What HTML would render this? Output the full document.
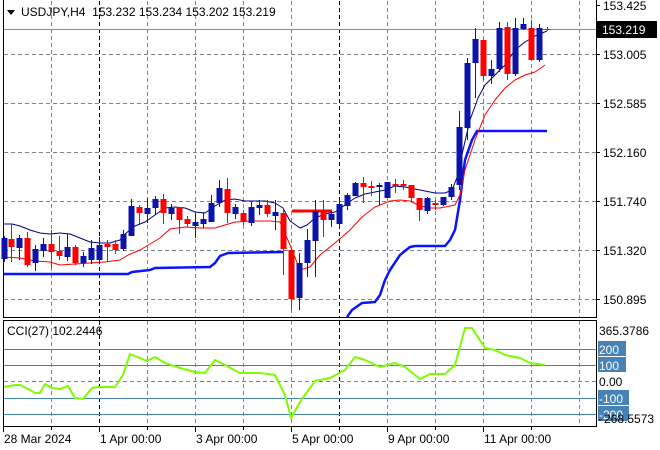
<!DOCTYPE html>
<html><head><meta charset="utf-8"><style>
html,body{margin:0;padding:0;background:#fff;width:660px;height:450px;overflow:hidden}
svg{display:block}
text{font-family:"Liberation Sans","DejaVu Sans",sans-serif;font-size:12px}
</style></head><body>
<svg id="s" width="660" height="450" xmlns="http://www.w3.org/2000/svg">
<g stroke="#7a8591" stroke-dasharray="4,3" stroke-width="1" id="grid"></g>
<path d="M3.5 0 V317.5 H596.5 V0" fill="none" stroke="#000"/>
<rect x="3.5" y="320.5" width="593" height="106" fill="none" stroke="#000"/>
<line x1="4" y1="29.5" x2="596" y2="29.5" stroke="#8a8a8a"/>
<g id="ind"></g>
<g id="c"></g>
<g id="lab"></g>
<path d="M7 10 L15 10 L11 15 Z" fill="#000"/>
<text x="21" y="16" fill="#000" xml:space="preserve">USDJPY,H4  153.232 153.234 153.202 153.219</text>
<text x="7" y="335" fill="#000">CCI(27) 102.2446</text>
</svg>
<script>
var NS="http://www.w3.org/2000/svg";
function el(p,t,a,txt){var e=document.createElementNS(NS,t);for(var k in a)e.setAttribute(k,a[k]);if(txt!==undefined)e.textContent=txt;document.getElementById(p).appendChild(e);return e;}
[51,99,147,195,243,291,339,387,435,483,531,579].forEach(function(x){
 var blk=(x==99||x==339);
 el('grid','line',{x1:x+.5,y1:1,x2:x+.5,y2:317,stroke:blk?'#000':'#7a8591'});
 el('grid','line',{x1:x+.5,y1:321,x2:x+.5,y2:426,stroke:blk?'#000':'#7a8591'});
});
[54,103,152,201,250,299].forEach(function(y){el('grid','line',{x1:4,y1:y+.5,x2:596,y2:y+.5});});
el('grid','line',{x1:4,y1:381.5,x2:596,y2:381.5});
[349,365,398,414].forEach(function(y){el('ind','line',{x1:4,y1:y+.5,x2:596,y2:y+.5,stroke:'#4682b4'});});
function pl(pts,col,w){el('ind','polyline',{points:pts,fill:'none',stroke:col,'stroke-width':w,'stroke-linejoin':'round'});}
pl("4,274 128,274 132,272 150,270 155,268 210,267 215,263 220,256 228,253 283,252",'#0a14ff',2.5);
pl("347,317 352,310 362,303 375,302 380,295 385,280 390,270 400,255 410,247 415,246 445,246 450,240 455,230 460,200 465,160 472,140 477,131 547,131",'#0a14ff',2.5);
pl("292,211 332,211",'#ff0000',3);
pl("4,224 12,224 20,226 30,230 40,233 50,234 60,233 70,234 80,238 90,242 100,243 110,243 120,240 125,234 135,226 145,222 155,215 165,208 175,207 185,208 195,212 205,213 215,206 225,200 235,199 245,201 255,201 265,201 275,203 283,208 290,221 300,228 307,225 315,218 325,214 335,212 345,205 355,198 365,194 375,192 385,190 395,186 405,187 415,189 425,191 435,193 445,193 452,190 458,175 463,150 470,120 478,98 485,85 495,75 505,65 515,50 525,42 535,36 547,31",'#00007f',1);
pl("4,257 20,258 35,261 50,262 60,265 75,264 90,263 105,262 120,260 128,255 140,250 160,238 170,229 185,227 200,228 215,228 235,222 250,221 270,221 280,222 290,245 300,270 310,267 320,255 335,243 350,230 362,217 375,207 390,201 400,200 410,201 420,206 430,208 440,208 455,205 460,195 465,170 475,140 485,115 495,100 505,88 515,80 525,75 535,72 545,65",'#ff0000',1);
pl("4,387 15,385 20,385 30,390 35,393 40,393 45,384 52,388 60,389 68,386 75,398 83,399 92,388 98,387 115,387 123,375 130,354 147,361 155,357 165,363 180,368 195,372 205,373 215,360 225,365 240,373 260,373 275,375 285,395 291,418 300,402 315,381 330,378 345,370 355,357 365,360 380,367 395,363 405,367 420,379 430,374 445,374 455,365 465,328 472,328 485,348 495,350 505,355 520,358 530,363 545,365",'#7cfc00',2);
var C=[[4,259,238,236,262],[11,239,247,224,262],[19,248,238,235,260],[27,238,265,232,267],[35,263,249,245,271],[43,251,244,238,257],[51,244,252,230,268],[59,251,256,236,260],[67,257,247,234,261],[75,247,263,245,265],[83,263,256,252,267],[91,260,248,240,264],[99,260,245,237,264],[107,244,247,240,262],[115,244,250,240,254],[123,249,234,230,251],[131,236,206,199,236],[139,207,213,205,224],[147,214,208,198,223],[155,208,199,196,215],[163,199,213,194,224],[171,214,208,204,220],[179,207,220,207,234],[187,219,224,216,227],[195,226,222,213,238],[203,224,219,212,228],[211,222,203,195,222],[219,203,188,180,207],[227,189,213,178,223],[235,214,207,204,219],[243,213,222,210,225],[251,223,207,202,226],[259,208,205,200,215],[267,205,214,200,217],[275,216,212,200,230],[283,213,249,208,275],[291,250,299,250,310],[299,298,263,253,310],[307,263,240,229,277],[315,241,211,200,277],[323,211,220,200,237],[331,220,214,211,227],[339,224,204,200,228],[347,206,195,193,210],[355,196,183,182,196],[363,183,187,177,203],[371,186,188,181,196],[379,187,185,183,205],[387,198,182,182,198],[395,184,186,179,193],[403,184,186,180,190],[411,185,198,185,202],[419,198,210,198,221],[427,211,198,197,214],[435,203,205,200,210],[443,205,197,197,206],[451,197,187,184,200],[459,185,127,111,190],[467,128,63,58,140],[475,63,39,28,98],[483,40,76,40,80],[491,76,69,60,84],[499,69,28,22,72],[507,27,74,22,80],[515,74,28,18,76],[523,29,24,18,30],[531,28,60,20,60],[539,60,28,24,62],[547,29,30,27,31]];
C.forEach(function(c){
 var bull=c[2]<c[1],col=bull?'#0a14a8':'#ff0000';
 el('c','line',{x1:c[0]+.5,y1:c[3],x2:c[0]+.5,y2:c[4],stroke:col});
 var t=Math.min(c[1],c[2]),h=Math.max(1,Math.abs(c[1]-c[2]));
 el('c','rect',{x:c[0]-2.5,y:t,width:6,height:h,fill:col});
});
[[153.425,5],[153.005,54],[152.585,103],[152.160,152],[151.740,201],[151.320,250],[150.895,299]].forEach(function(p){
 el('lab','line',{x1:596,y1:p[1]+.5,x2:600,y2:p[1]+.5,stroke:'#000'});
 el('lab','text',{x:603,y:p[1]+5,fill:'#000'},p[0].toFixed(3));
});
el('lab','rect',{x:597,y:21,width:60,height:17,fill:'#000'});
el('lab','text',{x:602,y:34,fill:'#fff'},'153.219');
el('lab','text',{x:599,y:335,fill:'#000'},'365.3786');
[[349,'200',28],[365,'100',28],[398,'-100',31],[414,'-200',31]].forEach(function(p){
 el('lab','rect',{x:598,y:p[0]-8,width:p[2],height:15,fill:'#4682b4'});
 el('lab','text',{x:599,y:p[0]+5,fill:'#fff'},p[1]);
});
el('lab','text',{x:599,y:386,fill:'#000'},'0.00');
el('lab','text',{x:604,y:423,fill:'#000'},'268.5573');
el('lab','text',{x:598,y:423,fill:'#000'},'-');
[[3,'28 Mar 2024'],[99,'1 Apr 00:00'],[195,'3 Apr 00:00'],[291,'5 Apr 00:00'],[387,'9 Apr 00:00'],[483,'11 Apr 00:00']].forEach(function(p){
 el('lab','line',{x1:p[0]+.5,y1:427,x2:p[0]+.5,y2:432,stroke:'#000'});
 el('lab','text',{x:p[0]+1,y:443,fill:'#000'},p[1]);
});
[51,147,243,339,435,531].forEach(function(x){el('lab','line',{x1:x+.5,y1:427,x2:x+.5,y2:430,stroke:'#000'});});
</script>
</body></html>
